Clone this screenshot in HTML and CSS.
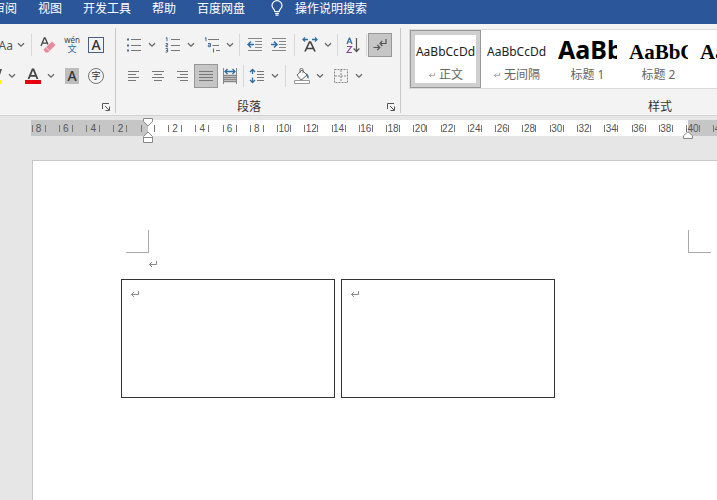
FILE: index.html
```html
<!DOCTYPE html>
<html lang="zh-CN">
<head>
    <meta charset="UTF-8">
    <meta name="viewport" content="width=device-width, initial-scale=1.0">
    <title>文档</title>
    <link rel="stylesheet" href="styles.css">
</head>
<body>
    <svg class="defs" aria-hidden="true">
        <symbol id="chevron" viewBox="0 0 8 6"><path d="M1 1.200l3 3 3-3" fill="none" stroke="#666" stroke-width="1.300"/></symbol>
        <symbol id="launcher" viewBox="0 0 8 8"><path d="M.5 6V.5H7M3 3l4 4M7.500 3.500v4h-4" fill="none" stroke="#555"/></symbol>
        <symbol id="para-mark" viewBox="0 0 10 8"><path d="M8.500 1v3.500H1.500M4 2L1.500 4.500 4 7" fill="none" stroke="#888"/></symbol>
    </svg>

    <header class="menu-bar">
        <nav class="tabs">
            <a href="#">审阅</a>
            <a href="#">视图</a>
            <a href="#">开发工具</a>
            <a href="#">帮助</a>
            <a href="#">百度网盘</a>
        </nav>
        <button class="tell-me">
            <svg width="12" height="16" viewBox="0 0 12 16" fill="none" stroke="#fff" stroke-width="1.2"><path d="M3.8 11.5C3.8 9 1 8.600 1 5.600a5 5 0 0 1 10 0c0 3-2.800 3.400-2.800 5.900zM4 13.300h4M4.500 15.200h3"/></svg>
            <span>操作说明搜索</span>
        </button>
    </header>

    <section class="ribbon">
        <!-- 字体 -->
        <div class="group font-group">
            <div class="row case-row">
                <button class="tool change-case" aria-label="更改大小写">Aa</button>
                <button class="arrow" aria-label="更多大小写"><svg width="8" height="6"><use href="#chevron"/></svg></button>
                <span class="sep wide"></span>
                <button class="tool" aria-label="清除格式">
                    <svg width="16" height="16" viewBox="0 0 16 16"><path d="M1 9L4.300 1h.8L8 7.500M2.300 6.200h4.400" fill="none" stroke="#444" stroke-width="1.3"/><path d="M3.500 12.500L12 4.500l3.500 3.500-7.500 7.500H5.500z" fill="#e8899b"/><path d="M5.800 10.300l4 3.800" stroke="#f7d5db"/></svg>
                </button>
                <button class="tool pinyin" aria-label="拼音指南"><span>wén</span><span class="pinyin-char">文</span></button>
                <button class="tool" aria-label="字符边框"><span class="boxed">A</span></button>
            </div>
            <div class="row color-row">
                <button class="tool" aria-label="突出显示颜色">
                    <svg width="16" height="16" viewBox="0 0 16 16"><path d="M7 9l5-8h4l-3 9z" fill="#555"/><path d="M0 12h16v4H0z" fill="#ff0"/></svg>
                </button>
                <button class="arrow next" aria-label="更多突出显示颜色"><svg width="8" height="6"><use href="#chevron"/></svg></button>
                <button class="tool" aria-label="字体颜色">
                    <svg width="16" height="16" viewBox="0 0 16 16"><path d="M3.500 11L7.500 1.500h1L12.500 11M5 7.800h6" fill="none" stroke="#444" stroke-width="1.800"/><path d="M0 12h16v4H0z" fill="#e3000f"/></svg>
                </button>
                <button class="arrow next" aria-label="更多字体颜色"><svg width="8" height="6"><use href="#chevron"/></svg></button>
                <button class="tool" aria-label="字符底纹"><span class="shaded">A</span></button>
                <button class="tool" aria-label="带圈字符"><span class="circled">字</span></button>
            </div>
            <div class="group-footer">
                <span class="group-name"></span>
                <button class="launch" aria-label="字体设置"><svg width="8" height="8"><use href="#launcher"/></svg></button>
            </div>
        </div>

        <!-- 段落 -->
        <div class="group para-group">
            <div class="row">
                <button class="tool" aria-label="项目符号">
                    <svg width="16" height="16" viewBox="0 0 16 16"><path d="M5 2.500h10M5 8.500h10M5 13.500h10" stroke="#777"/><path d="M1 1.500h2v2H1zM1 7.500h2v2H1zM1 12.500h2v2H1z" fill="#456f9c"/></svg>
                </button>
                <button class="arrow next" aria-label="更多项目符号"><svg width="8" height="6"><use href="#chevron"/></svg></button>
                <button class="tool" aria-label="编号">
                    <svg width="16" height="16" viewBox="0 0 16 16" fill="none"><path d="M6 2.500h9M6 8.500h9M6 13.500h9" stroke="#777"/><path d="M.8 1.200l1.200-.7v3.700M.6 6.500h2v1.700H1v1.500h2M.6 11.500h2V15h-2M1 13.300h1.500" stroke="#456f9c"/></svg>
                </button>
                <button class="arrow next" aria-label="更多编号"><svg width="8" height="6"><use href="#chevron"/></svg></button>
                <button class="tool" aria-label="多级列表">
                    <svg width="16" height="16" viewBox="0 0 16 16" fill="none"><path d="M4 2.500h11M8.500 8.500H15M12 13.500h4" stroke="#777"/><path d="M.8 1.200L2 .5v3.700M4 6.500h2.500v3.200H4.300V8h2.200M9.500 11.500v4" stroke="#456f9c"/></svg>
                </button>
                <button class="arrow" aria-label="更多多级列表"><svg width="8" height="6"><use href="#chevron"/></svg></button>
                <span class="sep"></span>
                <button class="tool" aria-label="减少缩进">
                    <svg width="16" height="16" viewBox="0 0 16 16" fill="none"><path d="M1 1.500h14M8 4.500h7M8 7.500h7M8 10.500h7M1 13.500h14" stroke="#888"/><path d="M7 7.500H1.200M4 4.500l-3 3 3 3" stroke="#2e6da4" stroke-width="1.500"/></svg>
                </button>
                <button class="tool" aria-label="增加缩进">
                    <svg width="16" height="16" viewBox="0 0 16 16" fill="none"><path d="M1 1.500h14M8 4.500h7M8 7.500h7M8 10.500h7M1 13.500h14" stroke="#888"/><path d="M0 7.500h5.800M3 4.500l3 3-3 3" stroke="#2e6da4" stroke-width="1.500"/></svg>
                </button>
                <span class="sep"></span>
                <button class="tool" aria-label="中文版式">
                    <svg width="16" height="16" viewBox="0 0 16 16" fill="none"><path d="M3 14.500L7.500 5h1L13 14.500M4.500 11.500h7" stroke="#444" stroke-width="1.700"/><path d="M6 2.500H1M3 .5l-2 2 2 2M10 2.500h5M13 .5l2 2-2 2" stroke="#2e6da4" stroke-width="1.300"/></svg>
                </button>
                <button class="arrow" aria-label="更多中文版式"><svg width="8" height="6"><use href="#chevron"/></svg></button>
                <span class="sep"></span>
                <button class="tool" aria-label="排序">
                    <svg width="16" height="16" viewBox="0 0 16 16" fill="none"><path d="M2 7l2.300-6h.4L7 7M2.800 5h3.500" stroke="#2e6da4" stroke-width="1.200"/><path d="M2 9.500h4.500l-4.500 6h5" stroke="#8a4a9c" stroke-width="1.200"/><path d="M11.500 1v13.500M8.700 11.500l2.800 3 2.800-3" stroke="#555" stroke-width="1.200"/></svg>
                </button>
                <span class="sep tight"></span>
                <button class="tool pressed" aria-label="显示编辑标记" aria-pressed="true">
                    <svg width="16" height="16" viewBox="0 0 16 16" fill="none" stroke="#555" stroke-width="1.200"><path d="M14 2v4.500H8M10.300 4L8 6.500 10.300 9M1.500 10.500h6M5.300 8l2.500 2.500L5.300 13"/></svg>
                </button>
            </div>
            <div class="row">
                <button class="tool" aria-label="左对齐">
                    <svg width="16" height="16" viewBox="0 0 16 16" stroke="#777"><path d="M2 3.500h11M2 6.500h8M2 9.500h11M2 12.500h8"/></svg>
                </button>
                <button class="tool" aria-label="居中">
                    <svg width="16" height="16" viewBox="0 0 16 16" stroke="#777"><path d="M2 3.500h12M4 6.500h8M2 9.500h12M4 12.500h8"/></svg>
                </button>
                <button class="tool" aria-label="右对齐">
                    <svg width="16" height="16" viewBox="0 0 16 16" stroke="#777"><path d="M3 3.500h11M6 6.500h8M3 9.500h11M6 12.500h8"/></svg>
                </button>
                <button class="tool pressed" aria-label="两端对齐" aria-pressed="true">
                    <svg width="16" height="16" viewBox="0 0 16 16" stroke="#777"><path d="M1 3.500h14M1 6.500h14M1 9.500h14M1 12.500h14"/></svg>
                </button>
                <button class="tool" aria-label="分散对齐">
                    <svg width="16" height="16" viewBox="0 0 16 16" fill="none"><path d="M1 6.500h14v8H1z" fill="#bbb"/><path d="M1.500 0v16M14.500 0v16M2 7.500h12M2 9.500h12M2 11.500h12M2 13.500h12" stroke="#888"/><path d="M3 3.500h10M5.500 1L3 3.500 5.500 6M10.500 1L13 3.500 10.500 6" stroke="#2e6da4" stroke-width="1.300"/></svg>
                </button>
                <span class="sep tight"></span>
                <button class="tool" aria-label="行距">
                    <svg width="16" height="16" viewBox="0 0 16 16" fill="none"><path d="M8 3.500h7M8 6.500h7M8 9.500h7M8 12.500h7" stroke="#777"/><path d="M3.500 1.500V6M1 4l2.500-2.500L6 4M3.500 9.500V14M1 12l2.500 2.500L6 12" stroke="#2e6da4" stroke-width="1.300"/></svg>
                </button>
                <button class="arrow" aria-label="更多行距"><svg width="8" height="6"><use href="#chevron"/></svg></button>
                <span class="sep wide"></span>
                <button class="tool" aria-label="底纹">
                    <svg width="16" height="16" viewBox="0 0 16 16" fill="none"><path d="M3 7l5-5 5 5-5 4.500H6.500zM6 5V1.500C6 0 9 0 9 1.500V5" fill="#f8f8f8" stroke="#666"/><path d="M12 5c2.500 1 3 3 2.500 6-1.500-1-2-3-2-5z" fill="#4a7a96"/><path d="M.5 12.500h15v3H.5z" fill="#fff" stroke="#999"/></svg>
                </button>
                <button class="arrow next" aria-label="更多底纹"><svg width="8" height="6"><use href="#chevron"/></svg></button>
                <button class="tool" aria-label="边框">
                    <svg width="16" height="16" viewBox="0 0 16 16" fill="none" stroke="#888"><path d="M1.500 1.500h13v13h-13zM8 2v12M2 8h12" stroke-dasharray="2 1"/></svg>
                </button>
                <button class="arrow" aria-label="更多边框"><svg width="8" height="6"><use href="#chevron"/></svg></button>
            </div>
            <div class="group-footer">
                <span class="group-name">段落</span>
                <button class="launch" aria-label="段落设置"><svg width="8" height="8"><use href="#launcher"/></svg></button>
            </div>
        </div>

        <!-- 样式 -->
        <div class="group style-group">
            <div class="gallery">
                <button class="style-card selected">
                    <span class="preview">AaBbCcDd</span>
                    <span class="style-name"><svg width="8" height="6"><use href="#para-mark"/></svg> 正文</span>
                </button>
                <button class="style-card">
                    <span class="preview">AaBbCcDd</span>
                    <span class="style-name"><svg width="8" height="6"><use href="#para-mark"/></svg> 无间隔</span>
                </button>
                <button class="style-card">
                    <span class="preview heading1">AaBb</span>
                    <span class="style-name">标题 1</span>
                </button>
                <button class="style-card">
                    <span class="preview heading2">AaBbC</span>
                    <span class="style-name">标题 2</span>
                </button>
                <button class="style-card" aria-label="标题">
                    <span class="preview heading2 title">Aa</span>
                </button>
            </div>
            <div class="group-footer">
                <span class="group-name">样式</span>
                <span class="launch"></span>
            </div>
        </div>
    </section>

    <main class="workspace">
        <div class="ruler">
            <div class="ruler-scale">
                <span>8</span><span>6</span><span>4</span><span>2</span><span></span>
                <span>2</span><span>4</span><span>6</span><span>8</span><span>10</span>
                <span>12</span><span>14</span><span>16</span><span>18</span><span>20</span>
                <span>22</span><span>24</span><span>26</span><span>28</span><span>30</span>
                <span>32</span><span>34</span><span>36</span><span>38</span><span>40</span>
                <span>42</span>
            </div>
            <svg class="indent left" width="10" height="26" viewBox="0 0 10 26" fill="#fff" stroke="#888"><path d="M.5.5h9v3L5 8 .5 3.500zM5 14l4.500 4.500v6h-9v-6zM.5 19.500h9"/></svg>
            <svg class="indent right" width="10" height="8" viewBox="0 0 10 8" fill="#fff" stroke="#888"><path d="M5 .7l4.500 4v2.800h-9V4.700z"/></svg>
        </div>

        <article class="page">
            <div class="crop-marks">
                <span class="crop crop-left"></span>
                <span class="crop crop-right"></span>
            </div>
            <p class="first-line"><svg width="10" height="8"><use href="#para-mark"/></svg></p>
            <div class="text-boxes">
                <div class="text-box"><svg width="10" height="8"><use href="#para-mark"/></svg></div>
                <div class="text-box"><svg width="10" height="8"><use href="#para-mark"/></svg></div>
            </div>
        </article>
    </main>
</body>
</html>
```
FILE: styles.css
```css
* {
    box-sizing: border-box;
}
body {
    font-family: "Noto Sans", "Noto Sans CJK SC", sans-serif;
    font-size: 12px;
    margin: 0;
    min-height: 100vh;
    display: flex;
    flex-direction: column;
    overflow: hidden;
    background-color: #e6e6e6;
    color: #333;
}
button {
    font: inherit;
    color: inherit;
    padding: 0;
    border: none;
    background: none;
}
svg {
    display: block;
    flex: none;
}
.defs {
    position: absolute;
    width: 0;
    height: 0;
}

/* 菜单栏 */
.menu-bar {
    display: flex;
    align-items: flex-start;
    height: 24px;
    background-color: #2b579a;
    color: #fff;
    line-height: 18px;
    white-space: nowrap;
}
.tabs {
    display: flex;
    gap: 21px;
    margin-left: -7px;
}
.tabs a {
    color: #fff;
    text-decoration: none;
}
.tell-me {
    display: flex;
    gap: 12px;
    margin-left: 26px;
    line-height: 18px;
}

/* 功能区 */
.ribbon {
    display: flex;
    padding: 4px 0 2px;
    background-color: #f3f3f3;
    border-bottom: 1px solid #d2d2d2;
    overflow: hidden;
}
.group {
    display: flex;
    flex-direction: column;
    flex: none;
    gap: 7px;
    height: 85px;
    padding-top: 5px;
    border-right: 1px solid #c8c8c8;
}
.font-group {
    width: 116px;
}
.para-group {
    width: 285px;
}
.para-group .row {
    padding-left: 6px;
}
.style-group {
    width: 536px;
    padding-top: 1px;
    border-right: none;
}
.row {
    display: flex;
    align-items: center;
    height: 24px;
}
.case-row {
    margin-left: -9px;
}
.color-row {
    margin-left: -18px;
}
.tool {
    display: flex;
    flex: none;
    align-items: center;
    justify-content: center;
    width: 24px;
    height: 24px;
}
.tool.pressed {
    background-color: #c6c6c6;
    border: 1px solid #979797;
}
.arrow {
    display: flex;
    flex: none;
    align-items: center;
    justify-content: center;
    width: 12px;
    height: 24px;
}
.arrow.next {
    margin-right: 3px;
}
.sep {
    flex: none;
    width: 1px;
    height: 22px;
    margin: 0 3px;
    background-color: #d8d8d8;
}
.sep.tight {
    margin: 0 1px;
}
.sep.wide {
    margin: 0 4px;
}
.change-case {
    justify-content: flex-end;
    padding-right: 2px;
    color: #555;
}
.pinyin {
    flex-direction: column;
    font-size: 8px;
    line-height: 8px;
    color: #444;
}
.pinyin-char {
    font-size: 9px;
    line-height: 10px;
    color: #2e6da4;
}
.boxed,
.shaded,
.circled {
    width: 16px;
    height: 16px;
    border: 1px solid #456080;
    font-size: 14px;
    font-weight: 500;
    line-height: 14px;
    text-align: center;
}
.shaded {
    width: 14px;
    border: none;
    background-color: #bdbdbd;
    line-height: 16px;
}
.circled {
    border-color: #777;
    border-radius: 50%;
    font-size: 9px;
    font-weight: normal;
    line-height: 13px;
}
.group-footer {
    display: flex;
    align-items: center;
    height: 12px;
    margin-top: auto;
    line-height: 12px;
}
.group-name {
    flex: 1;
    text-align: center;
}
.launch {
    display: flex;
    justify-content: center;
    width: 18px;
}

/* 样式库 */
.gallery {
    display: flex;
    height: 60px;
    margin-left: 8px;
    background-color: #fff;
    border: 1px solid #dcdcdc;
}
.style-card {
    display: flex;
    flex: none;
    flex-direction: column;
    justify-content: flex-end;
    width: 71px;
    height: 58px;
    padding: 0 6px 5px;
    color: #666;
}
.style-card.selected {
    padding: 0 1px 4px;
    border: 1px solid #979797;
    outline: 4px solid #cfcfcf;
    outline-offset: -5px;
}
.preview {
    height: 30px;
    overflow: hidden;
    color: #222;
    font-size: 12px;
    line-height: 30px;
    text-align: center;
    white-space: nowrap;
}
.preview.heading1 {
    color: #000;
    font-size: 25px;
    font-weight: bold;
    line-height: 24px;
    text-align: left;
}
.preview.heading2 {
    color: #000;
    font-family: "Liberation Serif", serif;
    font-size: 21px;
    font-weight: bold;
    text-align: left;
}
.preview.title {
    margin-bottom: 16px;
}
.style-name {
    display: flex;
    align-items: center;
    justify-content: center;
    gap: 3px;
    line-height: 16px;
    white-space: nowrap;
}

/* 标尺 */
.workspace {
    flex: 1;
    display: flex;
    flex-direction: column;
    padding-top: 4px;
}
.ruler {
    position: relative;
    height: 16px;
    margin-left: 31px;
    background: linear-gradient(to right, #c6c6c6 117px, #fff 117px, #fff 657px, #c6c6c6 657px);
}
.ruler-scale {
    display: grid;
    grid-template-columns: repeat(26, 1fr);
    align-items: center;
    justify-items: center;
    width: 709px;
    height: 17px;
    margin-left: -6px;
}
.ruler-scale span {
    width: 14px;
    height: 7px;
    border: solid #777;
    border-width: 0 1px;
    color: #555;
    font-family: "Liberation Sans", sans-serif;
    font-size: 10px;
    line-height: 8px;
    text-align: center;
}
.indent {
    position: absolute;
}
.indent.left {
    top: -2px;
    left: 112px;
}
.indent.right {
    top: 11px;
    left: 652px;
}

/* 页面 */
.page {
    flex: 1;
    margin: 24px 0 0 32px;
    padding-top: 69px;
    background-color: #fff;
    border: solid #c8c8c8;
    border-width: 1px 0 0 1px;
}
.crop-marks {
    display: flex;
    justify-content: space-between;
    width: 585px;
    margin-left: 93px;
}
.crop {
    width: 23px;
    height: 23px;
    border: 0 solid #aaa;
    border-bottom-width: 1px;
}
.crop-left {
    border-right-width: 1px;
}
.crop-right {
    border-left-width: 1px;
}
.first-line {
    margin: 0 0 0 115px;
    padding: 7px 0 11px;
}
.text-boxes {
    display: flex;
    gap: 6px;
    margin-left: 88px;
}
.text-box {
    width: 214px;
    height: 119px;
    padding: 10px 8px;
    border: 1px solid #333;
}
```
